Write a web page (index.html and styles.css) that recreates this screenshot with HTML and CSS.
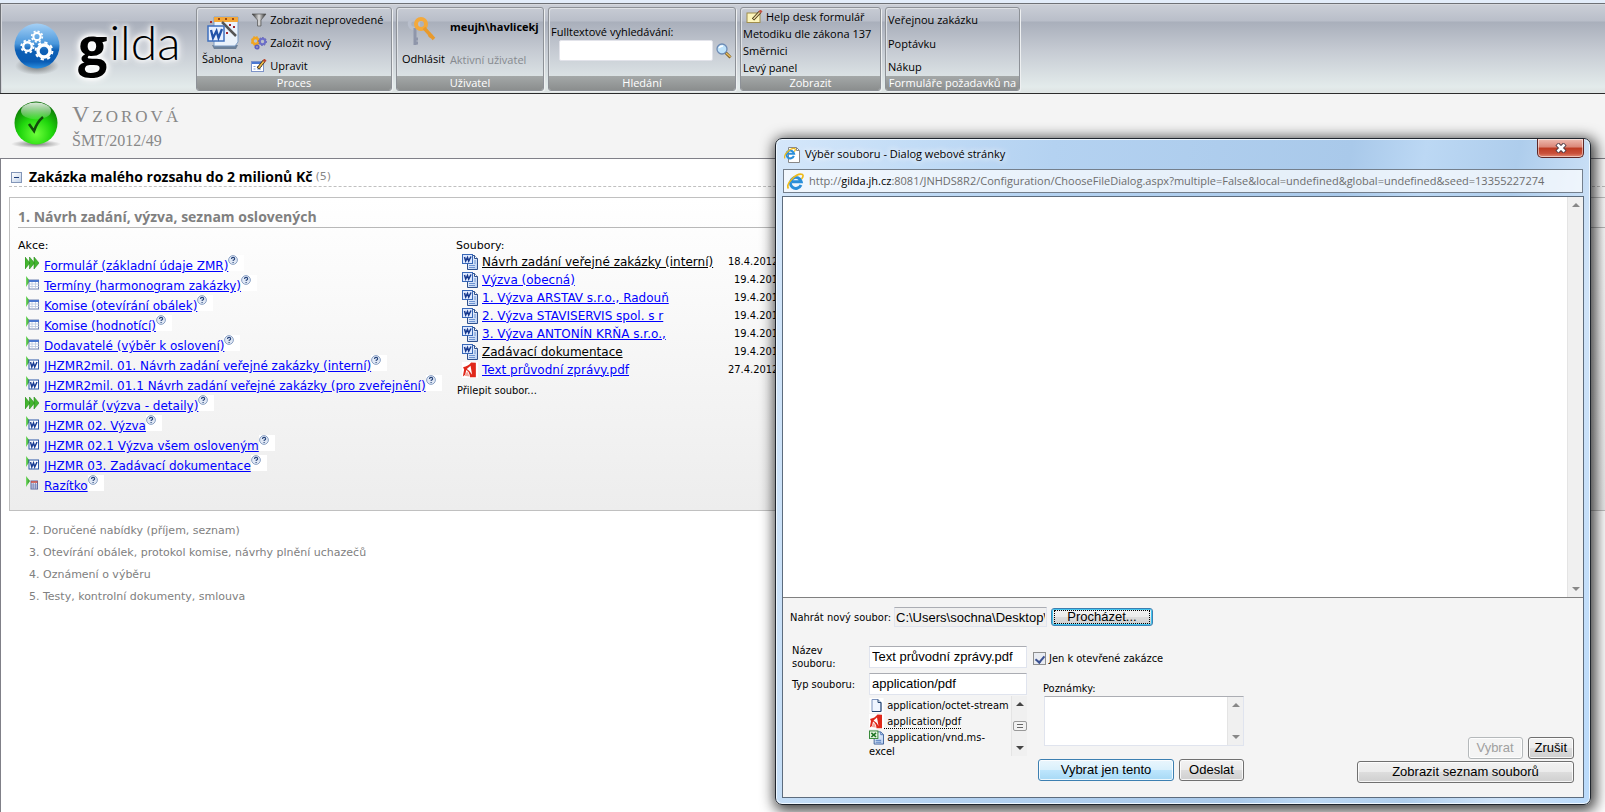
FILE: index.html
```html
<!DOCTYPE html>
<html lang="cs">
<head>
<meta charset="utf-8">
<title>Gilda – Vzorová</title>
<link rel="stylesheet" href="styles.css">
</head>
<body>
<svg class="defs" aria-hidden="true">
  <defs>
    <linearGradient id="g-green" x1="0" y1="0" x2="1" y2="0"><stop offset="0" stop-color="#7be06a"/><stop offset="1" stop-color="#1d8a12"/></linearGradient>
    <linearGradient id="g-doc" x1="0" y1="0" x2="1" y2="1"><stop offset="0" stop-color="#ffffff"/><stop offset="1" stop-color="#b4cdf2"/></linearGradient>
    <linearGradient id="g-ball" x1="0" y1="0" x2="0" y2="1"><stop offset="0" stop-color="#a5d0f5"/><stop offset=".45" stop-color="#4a97dc"/><stop offset=".6" stop-color="#0d5fb5"/><stop offset=".85" stop-color="#0a5cb4"/><stop offset="1" stop-color="#2a8fe0"/></linearGradient>
    <radialGradient id="g-ok" cx=".5" cy=".75" r=".75"><stop offset="0" stop-color="#6dff3a"/><stop offset=".5" stop-color="#1fd60c"/><stop offset="1" stop-color="#0a6a06"/></radialGradient>
    <linearGradient id="g-shine" x1="0" y1="0" x2="0" y2="1"><stop offset="0" stop-color="#fff" stop-opacity=".85"/><stop offset="1" stop-color="#fff" stop-opacity=".1"/></linearGradient>
    <radialGradient id="g-shadow"><stop offset="0" stop-color="#444" stop-opacity=".7"/><stop offset="1" stop-color="#444" stop-opacity="0"/></radialGradient>
    <linearGradient id="g-funnel"><stop offset="0" stop-color="#222"/><stop offset=".5" stop-color="#ddd"/><stop offset="1" stop-color="#222"/></linearGradient>
  </defs>
  <symbol id="i-run" viewBox="0 0 14 14"><path d="M0 1l5 6-5 6zM4.500 1l5 6-5 6zM9 1l5 6-5 6z" fill="#43b52f" stroke="#2a8a1c" stroke-width=".6"/></symbol>
  <symbol id="i-table" viewBox="0 0 14 14"><path d="M1 0l4 5-4 6z" fill="url(#g-green)"/><rect x="4" y="4" width="9.500" height="9" fill="#fff" stroke="#7384b0"/><path d="M4 5h10" stroke="#4a76cf" stroke-width="2"/><path d="M4 8h10M4 10.500h10M7 6v7M10.500 6v7" stroke="#b9c6dd" stroke-width=".8"/></symbol>
  <symbol id="i-runword" viewBox="0 0 14 14"><path d="M1 0l4 5-4 6z" fill="url(#g-green)"/><rect x="4" y="4" width="9.500" height="9" fill="#fff" stroke="#2b57a8"/><path d="M5.500 6l1.300 5 1.700-4 1.200 4 2.300-5" fill="none" stroke="#1b3f94" stroke-width="1.500"/></symbol>
  <symbol id="i-stamp" viewBox="0 0 14 14"><path d="M1 0l4 5-4 6z" fill="url(#g-green)"/><rect x="6" y="5" width="6.500" height="8" fill="#dfe3f2" stroke="#5a68a0"/><path d="M6 6h6.500" stroke="#d24b3a" stroke-width="1.500"/><path d="M8.200 7v6M10.500 7v6M6 9h7M6 11h7" stroke="#7683b5" stroke-width=".8"/></symbol>
  <symbol id="i-help" viewBox="0 0 10 10"><circle cx="5" cy="5" r="4.400" fill="#dfe7f4" stroke="#8ba1c4"/><path d="M3.500 3.900q0-1.500 1.600-1.500t1.600 1.300q0 1-1.500 1.500v.8M5.100 7v1" fill="none" stroke="#24427a" stroke-width="1.100"/></symbol>
  <symbol id="i-word" viewBox="0 0 16 16"><path d="M5.500 1.500h7l3 3v11h-10z" fill="url(#g-doc)" stroke="#2d4f8c"/><path d="M12.500 1.500v3h3" fill="#fff" stroke="#2d4f8c"/><path d="M7 11.500h6M7 13.500h6M12 7h2M12 9h2" stroke="#6d93d1"/><rect x=".5" y=".5" width="10" height="9" fill="#dfeaff" stroke="#3767b7"/><path d="M2.500 3l1.200 4 1.800-3.500L6.700 7 9 2.500" fill="none" stroke="#16398e" stroke-width="1.500"/></symbol>
  <symbol id="i-pdf" viewBox="0 0 15 15"><rect width="15" height="15" fill="#fff"/><path d="M1 5q5-1 7.500-4.500L13 .8v13.400H7.500Q7 9 4 7.500L3 12 .8 13.500 2 7z" fill="#e0281a"/><path d="M4.500 6.500L8 3.500l1.500 8.500q-2-4-5-5.500z" fill="#fff"/><path d="M2.500 13L5 8.500 7 13.500z" fill="#f4a69c"/></symbol>
  <symbol id="i-page" viewBox="0 0 14 15"><rect width="14" height="15" fill="#fff"/><path d="M2.500 1.500h6l3 3v9h-9z" fill="#f0f5ff" stroke="#7c93bd"/><path d="M8.500 1.500v3h3v9h-9" fill="none" stroke="#26456f"/></symbol>
  <symbol id="i-excel" viewBox="0 0 16 15"><path d="M5.500 1.500h7l3 3v10h-10z" fill="url(#g-doc)" stroke="#3b5f97"/><path d="M12.500 1.500v3h3M7 10.500h6M7 12.500h6" fill="none" stroke="#4a74b8"/><rect x=".5" y=".5" width="9" height="8" fill="#eaf6e4" stroke="#2f8431"/><path d="M2.500 2.500l5 4.500M7.500 2.500l-5 4.500" stroke="#1e7525" stroke-width="1.700"/></symbol>
  <symbol id="i-edit" viewBox="0 0 16 14"><rect x=".5" y="2.500" width="12" height="10" fill="#fff" stroke="#7d93c8"/><path d="M1 4h11" stroke="#4a78d2" stroke-width="2"/><path d="M2.500 7.500h2M2.500 10h2M6 7.500h5M6 10h4" stroke="#7ea0da"/><path d="M7 9.500L13 2" stroke="#3b2a12" stroke-width="3"/><path d="M7.500 9L13 2" stroke="#f0bd4d" stroke-width="1.700"/><path d="M12.600 2.500L14.500.6" stroke="#b64730" stroke-width="3"/></symbol>
  <symbol id="i-note" viewBox="0 0 17 13"><rect x="1" y="3" width="13" height="9.500" fill="#fdf5bb" stroke="#a08d4c"/><path d="M7 9.500L14 2" stroke="#40310d" stroke-width="3.200"/><path d="M7.500 9L14 2" stroke="#ead6a1" stroke-width="1.500"/><path d="M13.500 2.500l2-2" stroke="#c05545" stroke-width="3"/></symbol>
  <symbol id="i-ie" viewBox="0 0 17 17"><path d="M14 12A5.500 5.500 0 1 1 14.300 8.800H5" fill="none" stroke="#2b8fd9" stroke-width="2.900"/><path d="M1.500 15.500Q-1 12 5 6T15.500 1.500Q17 3 14.500 6" fill="none" stroke="#eebb1c" stroke-width="1.700"/></symbol>
</svg>

<header class="ribbon">
  <div class="brand">
    <svg class="brand-ball" viewBox="0 0 50 52" aria-hidden="true">
      <ellipse cx="25" cy="43" rx="22" ry="9" fill="url(#g-shadow)"/>
      <circle cx="25" cy="23" r="22.500" fill="url(#g-ball)"/>
      <g fill="none" stroke="#fff">
        <circle cx="15.500" cy="23.500" r="4.300" stroke-width="2.400"/><circle cx="15.500" cy="23.500" r="6.200" stroke-width="1.800" stroke-dasharray="2.400 2.470"/>
        <circle cx="25" cy="13.500" r="3.600" stroke-width="2.100"/><circle cx="25" cy="13.500" r="5.300" stroke-width="1.700" stroke-dasharray="2.080 2.080"/>
        <circle cx="32" cy="28" r="6" stroke-width="3.400"/><circle cx="32" cy="28" r="8.400" stroke-width="2" stroke-dasharray="3.300 3.300"/>
      </g>
    </svg>
    <div class="logo"><span class="logo-g">g</span><span class="logo-rest">ilda</span></div>
  </div>

  <section class="group group-process">
    <div class="group-body">
      <a class="big" href="#">
        <svg width="32" height="34" viewBox="0 0 32 34" aria-hidden="true">
          <path d="M5 29l2 4h22l2-4z" fill="#6d8199"/><path d="M7 1h24v25l-3 4H7z" fill="#eaf2fb" stroke="#7c9cc4"/><path d="M7 1h24v5H7z" fill="#f4a83a"/><path d="M11 3h2M18 3h2M25 3h2" stroke="#9b4a12" stroke-width="2"/>
          <path d="M15 6l14 14" stroke="#555" stroke-width="2.500"/><path d="M19 17h2M22 9h2M3 6h2M26 11h2" stroke="#a3242c" stroke-width="2"/>
          <rect x="1" y="10" width="16" height="15" fill="#e8f0ff" stroke="#3e6fbd" stroke-width="1.500"/><path d="M4 14l2 8 3.500-7 2 7L15 13" fill="none" stroke="#2353a8" stroke-width="2.300"/>
        </svg>
        <span>Šablona</span>
      </a>
      <ul class="cmds">
        <li><a href="#"><svg width="16" height="14" viewBox="0 0 16 14" aria-hidden="true"><path d="M1 1h14L10 7v6H6.500V7z" fill="url(#g-funnel)" stroke="#555" stroke-width=".7"/></svg>Zobrazit neprovedené</a></li>
        <li><a href="#"><svg width="16" height="14" viewBox="0 0 16 14" aria-hidden="true"><g fill="none"><circle cx="4.500" cy="5" r="3" stroke="#f2a51f" stroke-width="2.500"/><circle cx="4.500" cy="5" r="4.500" stroke="#f0a41b" stroke-dasharray="1.800 1.800"/><circle cx="11.500" cy="5.500" r="2.700" stroke="#6d6fc9" stroke-width="2"/><circle cx="11.500" cy="5.500" r="4" stroke="#5556b4" stroke-dasharray="1.500 1.500"/><circle cx="6" cy="11" r="1.700" stroke="#5d5fbe" stroke-width="1.800"/></g></svg>Založit nový</a></li>
        <li><a href="#"><svg width="16" height="14" aria-hidden="true"><use href="#i-edit"/></svg>Upravit</a></li>
      </ul>
    </div>
    <h2>Proces</h2>
  </section>

  <section class="group group-user">
    <div class="group-body">
      <a class="big" href="#">
        <svg width="32" height="34" viewBox="0 0 32 34" aria-hidden="true">
          <circle cx="7" cy="8" r="4.500" fill="none" stroke="#b9bfcc" stroke-width="3.500"/><path d="M8 12v17M8 23h3M8 27h3" stroke="#8f96aa" stroke-width="3"/>
          <circle cx="14" cy="8" r="5" fill="none" stroke="#f3a93c" stroke-width="4"/><path d="M17 12l10 11M22 21l3-3" stroke="#e89a2c" stroke-width="3.500"/>
        </svg>
        <span>Odhlásit</span>
      </a>
      <div class="user"><strong>meujh\havlicekj</strong><span>Aktivní uživatel</span></div>
    </div>
    <h2>Uživatel</h2>
  </section>

  <section class="group group-search">
    <form class="group-body search">
      <label for="q">Fulltextové vyhledávání:</label>
      <div class="search-row">
        <input id="q" type="text">
        <button type="button" aria-label="Hledat"><svg width="16" height="16" viewBox="0 0 16 16" aria-hidden="true"><path d="M9.500 9.500l5 5" stroke="#7a5a22" stroke-width="3"/><path d="M10 10l4.500 4" stroke="#e7bd5e" stroke-width="1.500"/><circle cx="6" cy="6" r="5" fill="#bfe3fb" stroke="#6d8bb5" stroke-width="1.300"/><path d="M3 5q1-2 4-2" fill="none" stroke="#fff" stroke-width="1.500"/></svg></button>
      </div>
    </form>
    <h2>Hledání</h2>
  </section>

  <section class="group group-view">
    <ul class="group-body links">
      <li><a href="#"><svg width="17" height="13" aria-hidden="true"><use href="#i-note"/></svg>Help desk formulář</a></li>
      <li><a href="#">Metodiku dle zákona 137</a></li>
      <li><a href="#">Směrnici</a></li>
      <li><a href="#">Levý panel</a></li>
    </ul>
    <h2>Zobrazit</h2>
  </section>

  <section class="group group-forms">
    <ul class="group-body links links-wide">
      <li><a href="#">Veřejnou zakázku</a></li>
      <li><a href="#">Poptávku</a></li>
      <li><a href="#">Nákup</a></li>
    </ul>
    <h2>Formuláře požadavků na</h2>
  </section>
</header>

<div class="case">
  <svg class="case-icon" viewBox="0 0 52 48" aria-hidden="true">
    <ellipse cx="26" cy="43" rx="25" ry="4" fill="url(#g-shadow)"/>
    <circle cx="26" cy="22" r="21.500" fill="url(#g-ok)"/>
    <ellipse cx="26" cy="10" rx="15" ry="8.500" fill="url(#g-shine)"/>
    <path d="M19 23l5 7q3-9 9-14" fill="none" stroke="#124d0c" stroke-width="2.600"/>
  </svg>
  <div>
    <h1>Vzorová</h1>
    <p>ŠMT/2012/49</p>
  </div>
</div>

<main>
  <h2 class="order"><button type="button" aria-label="Sbalit"></button>Zakázka malého rozsahu do 2 milionů Kč <small>(5)</small></h2>
  <section class="phase">
    <h3>1. Návrh zadání, výzva, seznam oslovených</h3>
    <div class="cols">
      <div class="actions">
        <p>Akce:</p>
        <ul>
          <li><svg class="ico"><use href="#i-run"/></svg><a href="#">Formulář (základní údaje ZMR)</a><span class="help"><svg><use href="#i-help"/></svg></span></li>
          <li><svg class="ico"><use href="#i-table"/></svg><a href="#">Termíny (harmonogram zakázky)</a><span class="help"><svg><use href="#i-help"/></svg></span></li>
          <li><svg class="ico"><use href="#i-table"/></svg><a href="#">Komise (otevírání obálek)</a><span class="help"><svg><use href="#i-help"/></svg></span></li>
          <li><svg class="ico"><use href="#i-table"/></svg><a href="#">Komise (hodnotící)</a><span class="help"><svg><use href="#i-help"/></svg></span></li>
          <li><svg class="ico"><use href="#i-table"/></svg><a href="#">Dodavatelé (výběr k oslovení)</a><span class="help"><svg><use href="#i-help"/></svg></span></li>
          <li><svg class="ico"><use href="#i-runword"/></svg><a href="#">JHZMR2mil. 01. Návrh zadání veřejné zakázky (interní)</a><span class="help"><svg><use href="#i-help"/></svg></span></li>
          <li><svg class="ico"><use href="#i-runword"/></svg><a href="#">JHZMR2mil. 01.1 Návrh zadání veřejné zakázky (pro zveřejnění)</a><span class="help"><svg><use href="#i-help"/></svg></span></li>
          <li><svg class="ico"><use href="#i-run"/></svg><a href="#">Formulář (výzva - detaily)</a><span class="help"><svg><use href="#i-help"/></svg></span></li>
          <li><svg class="ico"><use href="#i-runword"/></svg><a href="#">JHZMR 02. Výzva</a><span class="help"><svg><use href="#i-help"/></svg></span></li>
          <li><svg class="ico"><use href="#i-runword"/></svg><a href="#">JHZMR 02.1 Výzva všem osloveným</a><span class="help"><svg><use href="#i-help"/></svg></span></li>
          <li><svg class="ico"><use href="#i-runword"/></svg><a href="#">JHZMR 03. Zadávací dokumentace</a><span class="help"><svg><use href="#i-help"/></svg></span></li>
          <li><svg class="ico"><use href="#i-stamp"/></svg><a href="#">Razítko</a><span class="help"><svg><use href="#i-help"/></svg></span></li>
        </ul>
      </div>
      <div class="files">
        <p>Soubory:</p>
        <table>
          <tr><td><svg><use href="#i-word"/></svg></td><td><a class="seen" href="#">Návrh zadání veřejné zakázky (interní)</a></td><td>18.4.2012</td></tr>
          <tr><td><svg><use href="#i-word"/></svg></td><td><a href="#">Výzva (obecná)</a></td><td class="short">19.4.2012</td></tr>
          <tr><td><svg><use href="#i-word"/></svg></td><td><a href="#">1. Výzva ARSTAV s.r.o., Radouň</a></td><td class="short">19.4.2012</td></tr>
          <tr><td><svg><use href="#i-word"/></svg></td><td><a href="#">2. Výzva STAVISERVIS spol. s r</a></td><td class="short">19.4.2012</td></tr>
          <tr><td><svg><use href="#i-word"/></svg></td><td><a href="#">3. Výzva ANTONÍN KRŇA s.r.o.,</a></td><td class="short">19.4.2012</td></tr>
          <tr><td><svg><use href="#i-word"/></svg></td><td><a class="seen" href="#">Zadávací dokumentace</a></td><td class="short">19.4.2012</td></tr>
          <tr><td><svg><use href="#i-pdf"/></svg></td><td><a href="#">Text průvodní zprávy.pdf</a></td><td>27.4.2012</td></tr>
        </table>
        <a class="attach" href="#">Přilepit soubor...</a>
      </div>
    </div>
  </section>
  <ol class="next" start="2">
    <li>2. Doručené nabídky (příjem, seznam)</li>
    <li>3. Otevírání obálek, protokol komise, návrhy plnění uchazečů</li>
    <li>4. Oznámení o výběru</li>
    <li>5. Testy, kontrolní dokumenty, smlouva</li>
  </ol>
</main>

<div class="dialog" role="dialog" aria-labelledby="dlg-title">
  <div class="titlebar">
    <svg width="17" height="17" viewBox="0 0 17 17" aria-hidden="true"><path d="M4.500 1.500h8l3 3v12h-11z" fill="#fff" stroke="#888"/><path d="M12.500 1.500v3h3" fill="none" stroke="#888"/><svg width="12" height="13" y="1"><use href="#i-ie"/></svg></svg>
    <span id="dlg-title">Výběr souboru - Dialog webové stránky</span>
    <button class="close" type="button" aria-label="Zavřít"><svg width="12" height="10" viewBox="0 0 12 10" aria-hidden="true"><path d="M2 1l8 8M10 1L2 9" stroke="#4b3a44" stroke-width="4.500"/><path d="M2.500 1.500l7 7M9.500 1.500l-7 7" stroke="#fff" stroke-width="2.600"/></svg></button>
  </div>
  <div class="address"><svg width="17" height="17" aria-hidden="true"><use href="#i-ie"/></svg><span>http://<b>gilda.jh.cz</b>:8081/JNHDS8R2/Configuration/ChooseFileDialog.aspx?multiple=False&amp;local=undefined&amp;global=undefined&amp;seed=13355227274</span></div>
  <div class="client">
    <div class="list"><div class="scroll"><i class="up"></i><i class="down"></i></div></div>
    <form class="form">
      <div class="upload">
        <label for="path">Nahrát nový soubor:</label>
        <input id="path" type="text" readonly value="C:\Users\sochna\Desktop\">
        <button class="btn focus" type="button"><span>Procházet...</span></button>
      </div>
      <div class="fields">
        <div class="left">
          <label for="name">Název souboru:</label>
          <input id="name" type="text" value="Text průvodní zprávy.pdf">
          <label for="type">Typ souboru:</label>
          <input id="type" type="text" value="application/pdf">
          <div class="types">
            <ul>
              <li><span class="type"><svg><use href="#i-page"/></svg> application/octet-stream</span></li>
              <li><span class="type picked"><svg><use href="#i-pdf"/></svg> application/pdf</span></li>
              <li><svg><use href="#i-excel"/></svg> application/vnd.ms-excel</li>
            </ul>
            <div class="scroll live"><i class="up"></i><i class="thumb"></i><i class="down"></i></div>
          </div>
        </div>
        <div class="mid">
          <div class="check"><input id="only" type="checkbox" checked><label for="only">Jen k otevřené zakázce</label></div>
          <label for="notes">Poznámky:</label>
          <div class="notes"><textarea id="notes"></textarea><div class="scroll"><i class="up"></i><i class="down"></i></div></div>
          <div class="buttons"><button class="btn hot" type="button">Vybrat jen tento</button><button class="btn send" type="button">Odeslat</button></div>
        </div>
        <div class="right">
          <div class="buttons"><button class="btn" type="button" disabled>Vybrat</button><button class="btn" type="button">Zrušit</button></div>
          <button class="btn show" type="button">Zobrazit seznam souborů</button>
        </div>
      </div>
    </form>
  </div>
</div>
</body>
</html>
```
FILE: styles.css
```css
* { box-sizing: border-box; }
html, body { height: 100%; }
body {
  margin: 0;
  position: relative;
  display: flex;
  flex-direction: column;
  overflow: hidden;
  background: #fff;
  color: #000;
  font: 11px/14px "DejaVu Sans", Verdana, sans-serif;
}
h1, h2, h3, p, ul, ol { margin: 0; padding: 0; font-weight: normal; }
ul, ol { list-style: none; }
a { color: #00f; }
svg { flex: none; }
.defs { position: absolute; width: 0; height: 0; }

/* Ribbon */
.ribbon {
  display: flex;
  gap: 4px;
  flex: none;
  border-top: 3px solid #e3edfa;
  border-bottom: 1px solid #2c2c2c;
  box-shadow: inset 1px 1px 0 #6e7176, inset 2px 2px 0 #d5d7dc;
  background: linear-gradient(#ccd0d8 0, #b9bec9 18px, #a9afbb 19px, #c6cbd3 48px, #e3ebeb 84px, #dfe5e5 88px);
  padding: 4px 4px 2px;
  height: 94px;
  font: 11px/17px "Open Sans", "Noto Sans", sans-serif;
}
.ribbon a { color: #000; text-decoration: none; }
.brand { display: flex; width: 188px; padding-left: 8px; }
.brand-ball { width: 50px; height: 52px; margin-top: 16px; }
.logo {
  display: flex;
  gap: 2px;
  margin-left: 16px;
  text-shadow: 0 0 4px #fff, 0 0 5px #fff, 0 0 8px #fff, 0 0 10px #fff;
}
.logo-g { font: 700 52px/64px "Open Sans", sans-serif; margin-top: 6px; }
.logo-rest { font: 300 48px/64px Lato, sans-serif; margin-top: 3px; }
.group {
  display: flex;
  flex-direction: column;
  border: 1px solid #8d9197;
  border-radius: 3px;
  box-shadow: inset 1px 1px 0 #dfe2e6, 1px 1px 0 #eef0f1;
  overflow: hidden;
}
.group-body { flex: 1; }
.group h2 {
  height: 14px;
  background: linear-gradient(#a4a8a8, #8b8e8e);
  color: #fff;
  font-size: 11px;
  line-height: 14px;
  text-align: center;
  white-space: nowrap;
}
.group-process { width: 196px; }
.group-user { width: 148px; }
.group-search { width: 188px; }
.group-view { width: 141px; }
.group-forms { width: 135px; }
.group-process .group-body, .group-user .group-body { display: flex; gap: 8px; padding-left: 5px; }
.big { display: flex; flex-direction: column; align-items: center; padding-top: 8px; }
.cmds { display: flex; flex-direction: column; justify-content: space-between; padding: 3px 0 2px; white-space: nowrap; }
.cmds a, .links a { display: flex; align-items: center; gap: 3px; }
.user { display: flex; flex-direction: column; gap: 16px; padding-top: 10px; margin-left: -3px; white-space: nowrap; }
.user span { color: #868a8f; }
.search { padding: 15px 2px 0; }
.search label { display: block; }
.search-row { display: flex; align-items: center; gap: 2px; padding-left: 8px; }
.search-row input { flex: 1; min-width: 0; height: 21px; border: 1px solid #e2e3ea; border-radius: 2px; background: #fff; }
.search-row button { border: 0; padding: 0; background: none; width: 18px; height: 16px; }
.links { display: flex; flex-direction: column; justify-content: space-between; padding: 0 2px; white-space: nowrap; }
.links svg { margin-left: 3px; }
.links-wide { padding: 3px 2px 1px; }

/* Case header */
.case {
  display: flex;
  gap: 10px;
  flex: none;
  height: 64px;
  padding: 7px 10px 0;
  background: #f4f4f4;
  color: #888;
}
.case-icon { width: 52px; height: 48px; }
.case h1 { font: small-caps 24px/26px "Liberation Serif", serif; letter-spacing: 3px; }
.case p { font: 16px/28px "Liberation Serif", serif; }

/* Order */
main { flex: 1; border-top: 1px solid #808088; border-left: 1px solid #808088; padding: 9px 0 0 8px; }
.order {
  display: flex;
  align-items: center;
  gap: 7px;
  height: 19px;
  padding-left: 2px;
  border-bottom: 1px dashed #c0c0c0;
  font: 700 14px/18px "Open Sans", "Noto Sans", sans-serif;
}
.order small { font: 11px/14px "DejaVu Sans", sans-serif; color: #888; margin-left: -4px; }
.order button {
  width: 11px;
  height: 11px;
  padding: 0;
  border: 1px solid #8396b8;
  background: linear-gradient(#1d3c78, #1d3c78) center / 5px 1px no-repeat, linear-gradient(135deg, #fff, #c3d3ea);
}
.phase {
  margin-top: 10px;
  height: 314px;
  border: 1px solid #c0c0c0;
  border-right: 0;
  padding: 9px 0 0 8px;
  background: linear-gradient(#fff, #ededed);
}
.phase h3 { height: 21px; border-bottom: 1px solid #b8b8b8; color: #808080; font: 700 14px/19px "Open Sans", "Noto Sans", sans-serif; }
.cols { display: flex; padding-top: 11px; }
.actions { width: 438px; }
.actions ul { padding: 2px 0 0 7px; }
.actions li { display: flex; height: 20px; white-space: nowrap; }
.actions a { margin: 4px 0 0 5px; }
.actions a, .files td a { font-size: 12px; }
.ico { width: 14px; height: 14px; margin-top: 1px; }
.help { background: #fff; width: 16px; height: 16px; }
.help svg { display: block; width: 10px; height: 10px; }
.files table { border-collapse: collapse; margin: 0 0 4px 6px; }
.files td { height: 18px; padding: 0; white-space: nowrap; }
.files td:first-child { width: 20px; }
.files td:nth-child(2) { width: 246px; }
.files td:last-child { width: 60px; font-family: "DejaVu Sans Condensed", Tahoma, sans-serif; }
.files .short { padding-left: 6px; }
.files td svg { display: block; width: 16px; height: 16px; }
.files .seen { color: #000; }
.attach { color: #000; text-decoration: none; font: 11px/16px "DejaVu Sans Condensed", Tahoma, sans-serif; margin-left: 1px; }
.next { padding: 9px 0 0 20px; color: #808080; }
.next li { line-height: 22px; }

/* Dialog window */
.dialog {
  position: absolute;
  left: 775px;
  top: 138px;
  width: 816px;
  height: 667px;
  display: flex;
  flex-direction: column;
  padding: 0 6px 6px 6px;
  border: 1px solid #20262e;
  border-radius: 7px;
  background: linear-gradient(100deg, #d5e7fa 0, #c2dcf6 15%, #b4d2f1 30%, #a9c9ea 62%, #bcd8f4 70%, #aecdec 80%, #cfe3f8 90%, #b9dafb 100%);
  box-shadow: inset 0 0 0 1px #eef7ff, 2px 3px 14px 3px rgba(0, 0, 0, .75);
}
.titlebar { display: flex; align-items: center; gap: 4px; height: 30px; padding-left: 2px; font: 11px/16px "Open Sans", "Noto Sans", sans-serif; }
.titlebar span { text-shadow: 0 0 6px #fff, 0 0 8px #fff; }
.close {
  align-self: flex-start;
  display: grid;
  place-items: center;
  margin-left: auto;
  width: 47px;
  height: 19px;
  padding: 0;
  border: 1px solid #5d2727;
  border-top: 0;
  border-radius: 0 0 5px 5px;
  background: linear-gradient(#eebbb0, #da8577 45%, #bd3a22 50%, #c9503a 80%, #e38b75);
  box-shadow: inset 0 0 0 1px rgba(255, 255, 255, .5);
}
.address {
  display: flex;
  align-items: center;
  gap: 5px;
  height: 24px;
  margin: 0 1px 3px 1px;
  padding: 0 3px;
  border: 1px solid #747f8c;
  background: rgba(255, 255, 255, .7);
  color: #6d6d6d;
  font: 11px/16px "Open Sans", "Noto Sans", sans-serif;
  white-space: nowrap;
}
.address b { color: #000; font-weight: normal; }
.client { flex: 1; display: flex; flex-direction: column; border: 1px solid #5d6c7d; background: #f4f4f4; }
.list { flex: 1; display: flex; justify-content: flex-end; background: #fff; border-bottom: 1px solid #808080; }

.scroll { display: flex; flex-direction: column; justify-content: space-between; align-items: center; width: 16px; padding: 6px 0; background: #f0f0f0; border-left: 1px solid #e4e4e4; }
.scroll i { width: 0; height: 0; border: 4px solid transparent; }
.scroll .up { border-top: 0; border-bottom-color: #888; }
.scroll .down { border-bottom: 0; border-top-color: #888; }
.scroll.live .up { border-bottom-color: #444; }
.scroll.live .down { border-top-color: #444; }
.scroll .thumb { width: 14px; height: 10px; border: 1px solid #999; border-radius: 2px; background: repeating-linear-gradient(#f4f4f4 0 2px, #666 2px 3px) content-box; padding: 0 3px; }

.form { height: 199px; padding: 9px 9px 0 7px; font: 11px/13px "DejaVu Sans Condensed", Tahoma, sans-serif; }
.form input[type="text"], .btn { font: 13px/16px "Liberation Sans", Arial, sans-serif; color: #000; }
.form input[type="text"] { min-width: 0; padding: 0 2px; border: 1px solid #e0e4ee; border-top-color: #abadb3; background: #fff; }
.upload { display: flex; align-items: center; gap: 4px; }
.upload label { width: 100px; white-space: nowrap; }
.upload input[type="text"] { width: 153px; height: 20px; background: #f0f0f0; padding: 0 1px; }
.fields { display: flex; padding: 19px 0 0 2px; }
.left { display: grid; grid-template-columns: 77px 158px; grid-template-rows: 22px 22px 60px; row-gap: 5px; width: 235px; }
.left label { align-self: center; padding-right: 12px; }
.left .types { grid-column: 2; display: flex; justify-content: space-between; height: 60px; overflow: hidden; margin-top: -4px; }
.types ul { width: 136px; padding-top: 2px; }
.types li { line-height: 14px; min-height: 16px; }
.types svg { width: 15px; height: 15px; vertical-align: middle; }
.type { white-space: nowrap; }
.picked { border-bottom: 1px dotted #000; }
.mid { display: flex; flex-direction: column; width: 211px; margin-left: 6px; }
.check { display: flex; align-items: center; gap: 3px; height: 24px; margin-bottom: 12px; white-space: nowrap; }
.check input {
  appearance: none;
  width: 13px;
  height: 13px;
  margin: 0;
  border: 1px solid #8e8f8f;
  background: #e9ecf2;
  display: grid;
  place-items: center;
}
.check input::before { content: ""; width: 4px; height: 7px; border: solid #3b5191; border-width: 0 2px 2px 0; transform: rotate(40deg); }
.mid > label { padding-left: 10px; }
.notes { display: flex; height: 50px; margin: 1px 0 13px 11px; border: 1px solid #e0e4ee; border-top-color: #abadb3; background: #fff; }
.notes textarea { flex: 1; min-width: 0; border: 0; resize: none; background: none; padding: 0; }
.mid .buttons { margin-left: 5px; }
.buttons { display: flex; gap: 5px; justify-content: space-between; }
.btn {
  height: 22px;
  padding: 0 6px;
  border: 1px solid #707070;
  border-radius: 3px;
  background: linear-gradient(#f2f2f2, #ebebeb 50%, #dddddd 50%, #cfcfcf);
  box-shadow: inset 0 0 0 1px rgba(255, 255, 255, .8);
  white-space: nowrap;
}
.btn:disabled { color: #a0a0a0; border-color: #b5b9bb; background: #f4f4f4; width: 55px; }
.btn.hot { width: 136px; border-color: #3c7fb1; background: linear-gradient(#eaf6fd, #d9f0fc 50%, #bee6fd 50%, #a7d9f5); }
.btn.send { width: 65px; }
.btn.focus { width: 102px; height: 18px; line-height: 12px; padding: 0 2px; border-color: #3c7fb1; box-shadow: inset 0 0 0 1px #43c5ef; }
.btn.focus span { display: block; border: 1px dotted #000; }
.right { display: flex; flex-direction: column; gap: 2px; width: 217px; margin: 91px 0 0 auto; }
.right .buttons { justify-content: flex-end; }
```
